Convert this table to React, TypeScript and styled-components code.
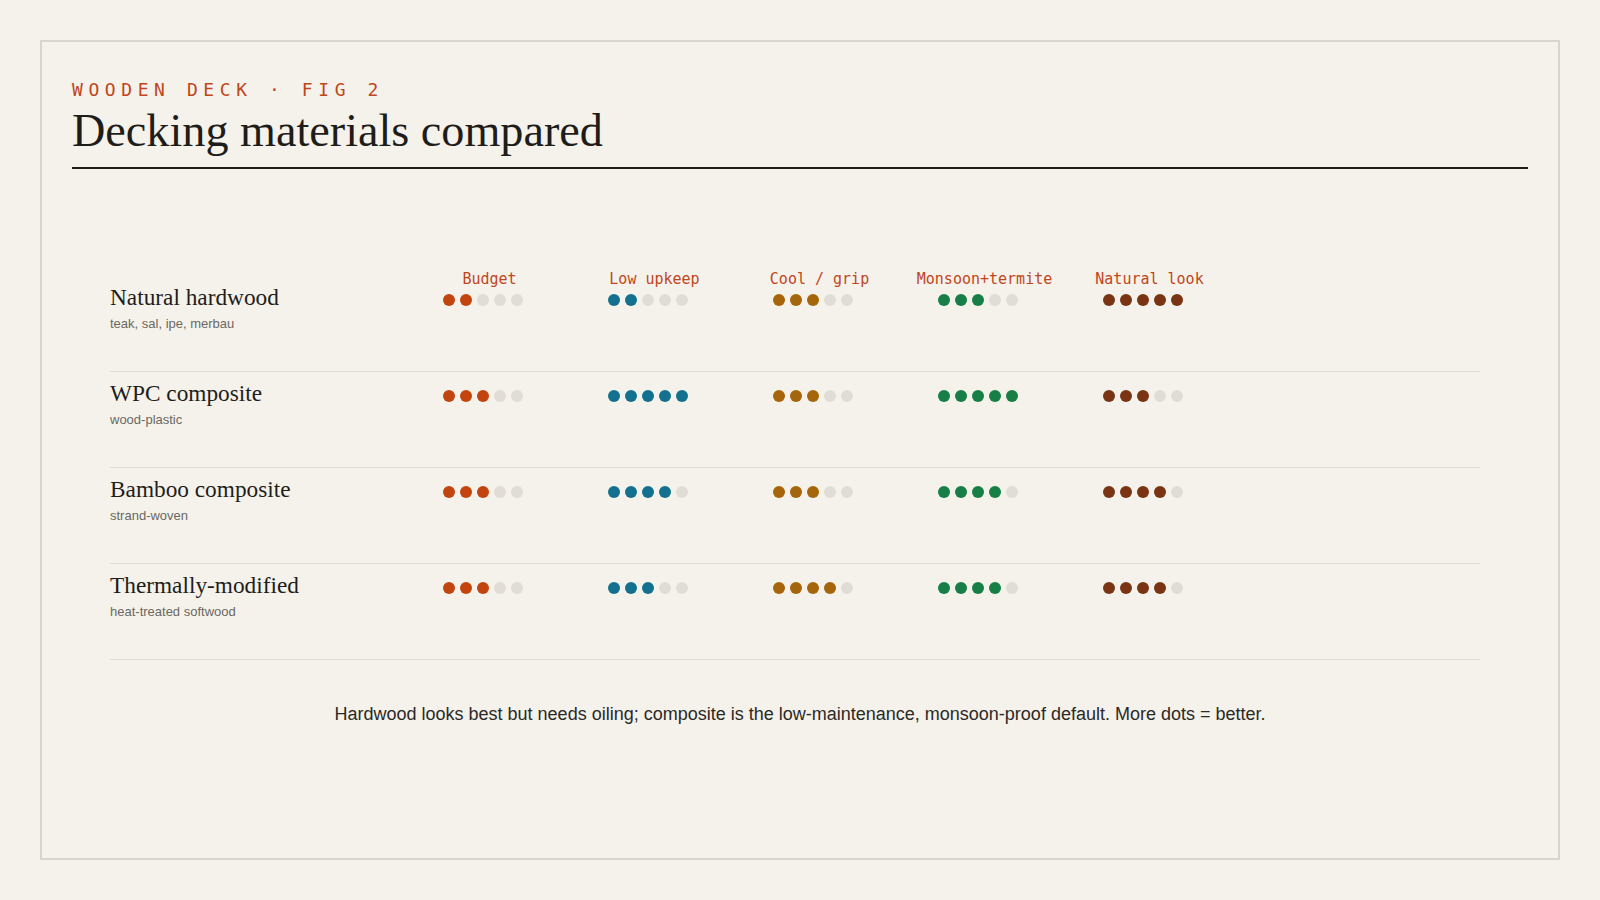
import React from "react";
import styled, { createGlobalStyle } from "styled-components";

const GlobalStyle = createGlobalStyle`
  html, body {
    margin: 0;
    padding: 0;
    background: #f5f2eb;
  }
  body {
    font-family: "Liberation Sans", Arial, sans-serif;
  }
`;

const Page = styled.div`
  box-sizing: border-box;
  width: 1600px;
  height: 900px;
  padding: 40px;
`;

const Frame = styled.section`
  box-sizing: border-box;
  height: 820px;
  border: 2px solid #d9d5cd;
  padding: 37px 30px 0;
  display: flex;
  flex-direction: column;
`;

const Header = styled.header`
  border-bottom: 2px solid #1f1d1a;
  padding-bottom: 10px;
`;

const Eyebrow = styled.div`
  font-family: "DejaVu Sans Mono", monospace;
  font-size: 18px;
  line-height: 21.6px;
  letter-spacing: 0.31em;
  color: #c0461b;
  text-transform: uppercase;
`;

const Title = styled.h1`
  margin: 3px 0 0;
  font-family: "Liberation Serif", "Times New Roman", serif;
  font-weight: 400;
  font-size: 46.2px;
  line-height: 53px;
  color: #1f1d1a;
`;

const Table = styled.div`
  margin: 107px 48px 0 38px;
`;

const Row = styled.div`
  display: grid;
  grid-template-columns: 261px repeat(5, 93px);
  column-gap: 72px;
  align-items: start;
  padding: 7px 0 39px;
  border-bottom: 1px solid #e0dcd4;
`;

const NameBlock = styled.div`
  display: flex;
  flex-direction: column;
  gap: 4px;
`;

const Name = styled.div`
  font-family: "Liberation Serif", "Times New Roman", serif;
  font-size: 23.3px;
  line-height: 28px;
  color: #1f1d1a;
`;

const Sub = styled.div`
  font-family: "Liberation Sans", Arial, sans-serif;
  font-size: 13px;
  line-height: 17px;
  color: #6b6862;
`;

const Cell = styled.div`
  position: relative;
  margin-top: 11px;
`;

const Caption = styled.div`
  position: absolute;
  left: 50%;
  bottom: calc(100% + 6px);
  transform: translateX(-50%);
  white-space: nowrap;
  font-family: "DejaVu Sans Mono", monospace;
  font-size: 15px;
  line-height: 18px;
  color: #c0461b;
`;

const Dots = styled.div`
  display: flex;
  gap: 5px;
`;

const Dot = styled.span<{ $color: string }>`
  display: block;
  width: 12px;
  height: 12px;
  border-radius: 50%;
  background: ${(p) => p.$color};
`;

const Footer = styled.p`
  margin: 42px 0 0;
  text-align: center;
  font-family: "Liberation Sans", Arial, sans-serif;
  font-size: 18px;
  line-height: 24px;
  color: #2b2926;
`;

const criteria = [
  { label: "Budget", color: "#c2450f" },
  { label: "Low upkeep", color: "#13708f" },
  { label: "Cool / grip", color: "#a5650b" },
  { label: "Monsoon+termite", color: "#177f45" },
  { label: "Natural look", color: "#7a3413" },
];

const EMPTY = "#dfddd6";

const materials = [
  { name: "Natural hardwood", sub: "teak, sal, ipe, merbau", scores: [2, 2, 3, 3, 5] },
  { name: "WPC composite", sub: "wood-plastic", scores: [3, 5, 3, 5, 3] },
  { name: "Bamboo composite", sub: "strand-woven", scores: [3, 4, 3, 4, 4] },
  { name: "Thermally-modified", sub: "heat-treated softwood", scores: [3, 3, 4, 4, 4] },
];

export default function App() {
  return (
    <>
      <GlobalStyle />
      <Page>
        <Frame>
          <Header>
            <Eyebrow>Wooden deck · Fig 2</Eyebrow>
            <Title>Decking materials compared</Title>
          </Header>
          <Table>
            {materials.map((m, ri) => (
              <Row key={m.name}>
                <NameBlock>
                  <Name>{m.name}</Name>
                  <Sub>{m.sub}</Sub>
                </NameBlock>
                {criteria.map((c, ci) => (
                  <Cell key={c.label}>
                    {ri === 0 && <Caption>{c.label}</Caption>}
                    <Dots>
                      {[0, 1, 2, 3, 4].map((i) => (
                        <Dot key={i} $color={i < m.scores[ci] ? c.color : EMPTY} />
                      ))}
                    </Dots>
                  </Cell>
                ))}
              </Row>
            ))}
          </Table>
          <Footer>
            Hardwood looks best but needs oiling; composite is the low-maintenance, monsoon-proof default. More dots = better.
          </Footer>
        </Frame>
      </Page>
    </>
  );
}
